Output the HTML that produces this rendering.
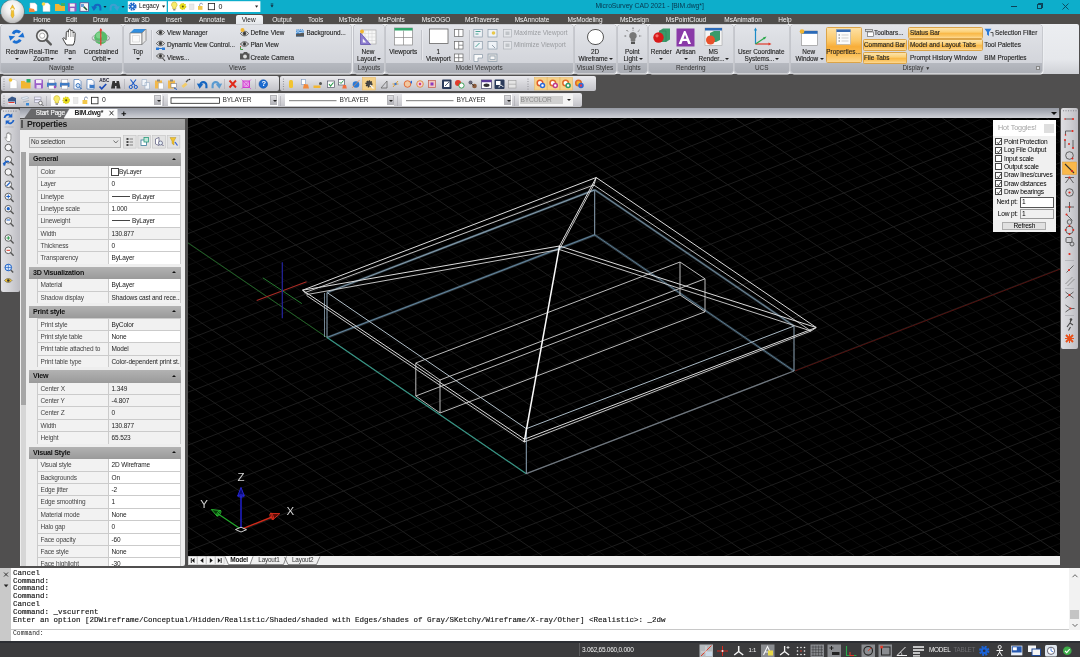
<!DOCTYPE html>
<html lang="en"><head><meta charset="utf-8"><title>MicroSurvey CAD 2021 - [BIM.dwg*]</title>
<style>
*{box-sizing:border-box;margin:0;padding:0}
html,body{width:1080px;height:657px;overflow:hidden;background:#504f4f;font-family:"Liberation Sans",sans-serif;}
body{position:relative;font-size:7px;color:#222;filter:blur(.65px)}
.a{position:absolute}
.t{position:absolute;white-space:nowrap;line-height:1}
.c{text-align:center}
/* title */
#title{left:0;top:0;width:1080px;height:13.6px;background:#0daecb}
#tabs{left:0;top:13.6px;width:1080px;height:11.4px;background:#4f4d4b}
#tabs .t{color:#f4f4f4;font-size:6.5px;top:3.5px;transform:translateX(-50%)}
/* ribbon */
#ribbon{left:0;top:23.6px;width:1078.5px;height:50.2px;border-radius:0 2px 0 0;background:linear-gradient(#eceef1 0,#e6e8ec 70%,#cfd1d6 100%)}
.grp{position:absolute;top:.8px;height:48px;border-radius:2.5px;background:linear-gradient(#e2e4e9 0,#dcdee3 30%,#d3d5db 78%);box-shadow:0 0 0 .6px #a9abb2,.8px .8px 0 .6px #f6f7f9;overflow:hidden}
.grp .lab{position:absolute;left:0;right:0;bottom:0;height:9.3px;background:linear-gradient(#b6b9c0,#aaadb4);color:#333;font-size:6.4px;text-align:center;line-height:9.6px;border-radius:0 0 2px 2px}
.rt{position:absolute;white-space:nowrap;line-height:1;font-size:6.4px;color:#1e1e1e;-webkit-text-stroke:.12px #1e1e1e;transform:translateX(-50%);text-align:center}
.rs{position:absolute;white-space:nowrap;line-height:1;font-size:6.4px;color:#1e1e1e;-webkit-text-stroke:.12px #1e1e1e}
.or{position:absolute;background:linear-gradient(#fde4ac 0,#fbcf74 42%,#f9b846 52%,#fbc766 80%,#fdd994 100%);border:.5px solid #dba448;border-radius:1.5px}
/* toolbars */
.tb{position:absolute;background:linear-gradient(#eaeaee 0,#d6d6da 50%,#c2c2c8 100%);border-radius:2px}
.combo{position:absolute;background:#fff;height:11.5px;top:1.5px}
.combo .dd{position:absolute;right:.5px;top:.5px;bottom:.5px;width:7px;background:linear-gradient(#dcdce0,#b4b4ba);border:.4px solid #b4b4b8}
.combo .dd:after{content:"";position:absolute;left:1.5px;top:4px;border:2px solid transparent;border-top:2.5px solid #222}
/* props */
#props{left:19.6px;top:118.5px;width:165.8px;height:447px;background:#eeeeee;overflow:hidden;border-radius:0 0 2px 0}
.sec{position:absolute;z-index:2;left:9.4px;width:152px;height:12.5px;background:linear-gradient(#b2b2b2,#9a9a9a);font-weight:bold;font-size:7.1px;color:#111;line-height:12.8px;padding-left:4px;letter-spacing:-.2px}
.sec:after{content:"";position:absolute;right:5px;top:4.6px;border:2.1px solid transparent;border-bottom:2.6px solid #111;border-top:0}
.row{position:absolute;left:17.7px;width:143.7px;height:12.36px;background:#cbcbcb;font-size:6.5px;line-height:12px;color:#222}
.row i{position:absolute;left:.7px;width:70.3px;top:1px;bottom:0;background:#f2f2f2;color:#444;font-style:normal;padding-left:2.5px;letter-spacing:-.15px}
.row b{position:absolute;left:71.8px;right:.6px;top:1px;bottom:0;background:#fff;font-weight:normal;padding-left:2.5px;letter-spacing:-.15px;white-space:nowrap;overflow:hidden}
/* cmd */
#cmd{left:0;top:567.5px;width:1080px;height:74px;background:#fff}
#cmd .hl{position:absolute;left:13px;font-family:"Liberation Mono",monospace;font-size:7.5px;line-height:7.8px;color:#111;white-space:pre;-webkit-text-stroke:.15px #222}
#status{left:0;top:641px;width:1080px;height:16px;background:#3b3b3d}
.si{position:absolute;top:3px;width:12px;height:12px}
/* hot toggles */
#hot{left:993px;top:120px;width:62.5px;height:111.5px;background:#f0f0f0}
#hot .cb{position:absolute;left:2.3px;width:7.2px;height:7.2px;background:#fff;border:.6px solid #444;margin-top:-.2px}
#hot .l{position:absolute;left:11px;font-size:6.6px;line-height:1;color:#000;white-space:nowrap;letter-spacing:-.2px}
</style></head><body>
<!-- TITLE BAR -->
<div id="title" class="a">
  <div class="t" style="left:595.5px;top:3.4px;font-size:6.8px;color:#07364e;letter-spacing:-.05px">MicroSurvey CAD 2021 - [BIM.dwg*]</div>
  <!-- quick access icons -->
  <svg class="a" style="left:26px;top:0" width="250" height="14" viewBox="0 0 250 14">
    <!-- new from template -->
    <path d="M4 3h5l2 2v6H4z" fill="#fff" stroke="#c9c9c9" stroke-width=".5"/><path d="M3 8l5 1 1 3H3z" fill="#f28a3c"/>
    <!-- new -->
    <path d="M17 3h5l2 2v6.5h-7z" fill="#fff" stroke="#d0d0d0" stroke-width=".5"/><circle cx="17.5" cy="4" r="1.8" fill="#f7d84a"/>
    <!-- open -->
    <path d="M29 4h4l1 1.2h5V11H29z" fill="#f2b632"/><path d="M35 3h4v3h-4z" fill="#3fae6a"/>
    <!-- save -->
    <rect x="42" y="3" width="8.5" height="8.5" rx=".8" fill="#8a5bc0"/><rect x="43.8" y="3.6" width="5" height="3" fill="#f2f2f2"/><rect x="44.2" y="8" width="4.2" height="3.4" fill="#e8e0f4"/>
    <!-- saveas/print preview -->
    <rect x="54" y="2.8" width="8.5" height="8.5" fill="#f4f4f4" stroke="#5a4a8a" stroke-width=".8"/><path d="M56 5l5 5" stroke="#1a5a3a" stroke-width="1.6"/><rect x="55" y="4" width="3" height="3" fill="#6aa0d8"/>
    <!-- undo -->
    <path d="M74.400 10.400V7.700a3 3 0 0 0-6 0" fill="none" stroke="#1565c0" stroke-width="2"/><path d="M65.200 6.200l6 .6-3.400 4.300z" fill="#1565c0"/>
    <path d="M77.5 6l1.5 2 1.500-2z" fill="#123"/>
    <!-- redo -->
    <path d="M84.600 10.400V7.700a3 3 0 0 1 6 0" fill="none" stroke="#3f9fd0" stroke-width="2"/><path d="M93.800 6.200l-6 .6 3.400 4.300z" fill="#3f9fd0"/>
    <path d="M95.500 6l1.500 2 1.500-2z" fill="#123"/>
    <!-- workspace combo -->
    <rect x="101.800" y="1.200" width="38.900" height="10.800" fill="#fff"/>
    <circle cx="106.500" cy="6.600" r="3" fill="none" stroke="#1e66c8" stroke-width="2.200" stroke-dasharray="1.600 .75"/><circle cx="106.500" cy="6.600" r="2.500" fill="#1e66c8"/><circle cx="106.500" cy="6.600" r="1" fill="#fff"/>
    <path d="M136 5.500l1.600 2.200 1.600-2.200z" fill="#222"/>
    <!-- layer combo -->
    <rect x="142" y="1.200" width="92.400" height="10.800" fill="#fff"/>
    <path d="M148.300 2a2.800 2.800 0 0 1 1.600 5.100v1.700h-3.200V7.100a2.800 2.800 0 0 1 1.600-5.100z" fill="#f8ec6a" stroke="#b8a21a" stroke-width=".5"/><rect x="147.200" y="9" width="2.200" height="1.500" fill="#8a8a8a"/>
    <circle cx="156.800" cy="6.400" r="2.800" fill="#e8dc1a" stroke="#d8cc10" stroke-width="1.400" stroke-dasharray="1.300 .8"/><circle cx="156.800" cy="6.400" r="2.300" fill="#ece21e"/><circle cx="156.800" cy="6.400" r="1" fill="#5a5410"/>
    <rect x="163.500" y="4" width="4.500" height="5.500" fill="#e8e8e8" stroke="#cfcfcf" stroke-width=".4"/>
    <rect x="172" y="6" width="4.500" height="3.800" fill="#f2c84a"/><path d="M173.700 6V4.600a1.400 1.400 0 0 1 2.800 0" fill="none" stroke="#7a8aa8" stroke-width=".8"/>
    <rect x="182.300" y="3.400" width="6.300" height="6.300" fill="#fff" stroke="#222" stroke-width=".8"/>
    <path d="M229 5.500l1.600 2.200 1.600-2.200z" fill="#222"/>
    <path d="M244.500 5.200l1.500 2.200 1.500-2.200z" fill="#123"/><rect x="244.700" y="3.600" width="2.600" height=".8" fill="#123"/>
  </svg>
  <div class="t" style="left:139px;top:3.400px;font-size:6.400px;color:#111;letter-spacing:-.1px">Legacy</div>
  <div class="t" style="left:218.500px;top:3.400px;font-size:7px;color:#111">0</div>
  <!-- window controls -->
  <div class="a" style="left:1010.500px;top:6.300px;width:6px;height:.9px;background:#0b4258"></div>
  <div class="a" style="left:1036.500px;top:3.800px;width:5px;height:5px;border:.8px solid #0b4258;border-radius:.6px"></div>
  <div class="a" style="left:1038px;top:2.600px;width:5px;height:5px;border:.8px solid #0b4258;border-left:0;border-bottom:0;border-radius:.6px"></div>
  <svg class="a" style="left:1062px;top:3px" width="7" height="7"><path d="M.5.5l6 6M6.500.5l-6 6" stroke="#0b4258" stroke-width=".9"/></svg>
</div>
<!-- MENU TABS -->
<div id="tabs" class="a">
  <div class="a" style="left:235.500px;top:1.400px;width:27px;height:10px;background:linear-gradient(#f4f5f7,#e4e6ea);border-radius:2px 2px 0 0"></div>
  <div class="t" style="left:42px">Home</div><div class="t" style="left:71.500px">Edit</div><div class="t" style="left:100.700px">Draw</div>
  <div class="t" style="left:137px">Draw 3D</div><div class="t" style="left:173.700px">Insert</div><div class="t" style="left:212px">Annotate</div>
  <div class="t" style="left:248.700px;color:#222">View</div><div class="t" style="left:282px">Output</div><div class="t" style="left:315.600px">Tools</div>
  <div class="t" style="left:350.700px">MsTools</div><div class="t" style="left:391.500px">MsPoints</div><div class="t" style="left:436px">MsCOGO</div>
  <div class="t" style="left:482px">MsTraverse</div><div class="t" style="left:532px">MsAnnotate</div><div class="t" style="left:585px">MsModeling</div>
  <div class="t" style="left:634.400px">MsDesign</div><div class="t" style="left:686px">MsPointCloud</div><div class="t" style="left:743px">MsAnimation</div>
  <div class="t" style="left:785px">Help</div>
</div>
<!-- app button -->
<div class="a" style="left:1.200px;top:-.5px;width:23px;height:23px;border-radius:50%;background:radial-gradient(circle at 50% 35%,#fff 0,#f0f0f0 35%,#c8c8c8 70%,#8e8e8e 100%);box-shadow:0 0 0 .6px #6a6a6a"></div>
<svg class="a" style="left:7.200px;top:4px" width="11" height="15" viewBox="0 0 11 15"><path d="M5.500.8l2.200 4.200-1.200 1 .6 5.500-1.600 2.700-1.600-2.700.6-5.500-1.200-1z" fill="#f2c230" stroke="#c8961a" stroke-width=".4"/><circle cx="5.500" cy="5.200" r="1.300" fill="#fff3c0"/></svg>
<!-- RIBBON -->
<div id="ribbon" class="a"><div id="rin" class="a" style="left:0;top:.4px;width:1080px;height:49px">
<style>
.ar{position:absolute;width:0;height:0;border:2px solid transparent;border-top:2.6px solid #222;border-bottom:0;margin-top:.3px;margin-left:-.3px}
.vs{position:absolute;width:.6px;background:#c2c4ca;box-shadow:.6px 0 0 #f0f1f4}
.gy{color:#9a9ca0 !important;-webkit-text-stroke:0 transparent !important}
</style>
<!-- Navigate -->
<div class="grp" style="left:1px;width:121px"><div class="lab">Navigate</div></div>
<svg class="a" style="left:0;top:0" width="122" height="24" viewBox="0 24 122 24">
  <!-- redraw -->
  <g fill="none" stroke="#1b6fd2" stroke-width="2.900"><path d="M13 33.800a4.300 4.300 0 0 1 7-1.300"/><path d="M20.300 39.600a4.300 4.300 0 0 1-7 1.300"/></g>
  <path d="M8.700 35.800l6.400.4-4.800 4.600z" fill="#1b6fd2"/><path d="M24.500 37.500l-6.400-.4 4.800-4.600z" fill="#1b6fd2"/>
  <!-- zoom -->
  <circle cx="42.200" cy="35.700" r="5.500" fill="#f6f6f6" stroke="#5a5a5a" stroke-width="1.700"/><circle cx="42.200" cy="35.700" r="2.600" fill="#fff" stroke="#9a9a9a" stroke-width=".8"/><path d="M46.300 39.900l4.500 4.500" stroke="#5a5a5a" stroke-width="2.400" stroke-linecap="round"/>
  <!-- pan hand -->
  <path d="M66.500 45c-1.200-1.800-3-4.600-3.800-6.600.9-1 2.200-.3 3.300 1.300l.3-7.400c.1-1.400 2-1.400 2 0l.3-2.200c.2-1.400 2.100-1.300 2.100.1l.2 1c.3-1.300 2.100-1.200 2.100.2l.1 1.600c.5-1.200 2.200-.9 2.100.4l-.4 6.800c-.1 2-.9 3.600-1.600 4.800z" fill="#fff" stroke="#3c3c3c" stroke-width="1"/>
  <path d="M68.400 32.500v4.500M70.800 31.500v5.500M73.100 32.800v4.200" stroke="#555" stroke-width=".6"/>
  <!-- orbit -->
  <ellipse cx="100.800" cy="38" rx="8.800" ry="3.600" fill="none" stroke="#a0a0a0" stroke-width=".9"/>
  <circle cx="100.800" cy="37.600" r="6.600" fill="#58bb6a"/><circle cx="99" cy="35.500" r="3" fill="#8fdb9a" opacity=".7"/>
  <path d="M92.300 39.300c4 2.700 13 2.700 17 0" fill="none" stroke="#a0a0a0" stroke-width=".9"/>
  <path d="M100.800 29.500v16" stroke="#e8382a" stroke-width="1.200"/><path d="M99.200 30.800l1.600-2.800 1.600 2.800z" fill="#e8382a"/>
</svg>
<div class="rt" style="left:16.800px;top:24.800px">Redraw</div><div class="ar" style="left:14.800px;top:34px"></div>
<div class="rt" style="left:43.700px;top:24.800px">Real-Time</div><div class="rt" style="left:41.500px;top:31.900px">Zoom</div><div class="ar" style="left:50.500px;top:34px"></div>
<div class="rt" style="left:70px;top:24.800px">Pan</div><div class="ar" style="left:68.300px;top:34px"></div>
<div class="rt" style="left:101px;top:24.800px">Constrained</div><div class="rt" style="left:99px;top:31.900px">Orbit</div><div class="ar" style="left:107.500px;top:34px"></div>
<!-- Views -->
<div class="grp" style="left:124px;width:227px"><div class="lab">Views</div></div>
<svg class="a" style="left:129px;top:4.500px" width="18" height="18" viewBox="0 0 18 18"><path d="M1 5l4-4h12l-4 4z" fill="#2f8ee0"/><path d="M1 5h12v11.500H1z" fill="#fafafa" stroke="#777" stroke-width=".7"/><path d="M13 5l4-4v11.500l-4 4z" fill="#e6e6e6" stroke="#777" stroke-width=".7"/><path d="M3.500 7.500h7v6.500h-7z" fill="none" stroke="#ccc" stroke-width=".6"/></svg>
<div class="rt" style="left:138px;top:24.800px">Top</div><div class="ar" style="left:136.300px;top:34px"></div>
<div class="vs" style="left:151px;top:6px;height:30px"></div>
<svg class="a" style="left:155px;top:3px" width="150" height="38" viewBox="0 0 150 38">
  <g fill="none" stroke="#444" stroke-width=".9">
   <path d="M1.500 5.500c2-3 6-3 8 0-2 3-6 3-8 0z" fill="#e8e8e8"/><circle cx="5.500" cy="5.500" r="1.400" fill="#333"/>
   <path d="M1.500 16.500c2-3 6-3 8 0-2 3-6 3-8 0z" fill="#e8e8e8"/><circle cx="5.500" cy="16.500" r="1.400" fill="#333"/>
   <path d="M1.500 29c2-3 6-3 8 0-2 3-6 3-8 0z" fill="#e8e8e8"/><circle cx="5.500" cy="29" r="1.400" fill="#333"/>
   <path d="M85.500 6.500c2-3 6-3 8 0-2 3-6 3-8 0z" fill="#e8e8e8"/><circle cx="89.500" cy="6.500" r="1.400" fill="#333"/>
   <path d="M85.500 17c2-3 6-3 8 0-2 3-6 3-8 0z" fill="#e8e8e8"/><circle cx="89.500" cy="17" r="1.400" fill="#333"/>
  </g>
  <path d="M1 20.500h3v2.500H1zM7 20.500h3v2.500H7z" fill="#2a7ad8"/><path d="M4 21.500h3" stroke="#2a7ad8"/>
  <path d="M7.500 31l2.500 3" stroke="#444" stroke-width="1.100"/>
  <circle cx="87.500" cy="3" r="2" fill="#f2b632"/>
  <path d="M85.500 20v2.500h2.500" fill="none" stroke="#3a9a3a" stroke-width=".9"/><path d="M85.500 20v-1" stroke="#d83a2a" stroke-width=".9"/>
  <path d="M85 26.500h3l1-1.500h3l1 1.500h1.500v6H85z" fill="#555"/><circle cx="90" cy="29.500" r="1.900" fill="#ddd"/>
  <path d="M141 3.500h8v6h-8z" fill="#3a8ad8"/><path d="M141 7.500c2-2 3 0 4-1s2 0 4-1v4h-8z" fill="#555"/><path d="M141.500 2.500h7" stroke="#3a8ad8" stroke-width=".8" stroke-dasharray="1 .8"/><path d="M141 5.500l2-.8 2 1 3-.8 1 .5" stroke="#fff" stroke-width=".7" fill="none"/>
</svg>
<div class="rs" style="left:167px;top:6px">View Manager</div>
<div class="rs" style="left:167px;top:18.400px">Dynamic View Control...</div>
<div class="rs" style="left:167px;top:30.600px">Views...</div>
<div class="rs" style="left:250.400px;top:6px">Define View</div>
<div class="rs" style="left:250.400px;top:18.400px">Plan View</div>
<div class="rs" style="left:250.400px;top:30.600px">Create Camera</div>
<div class="rs" style="left:306.400px;top:6px">Background...</div>
<!-- Layouts -->
<div class="grp" style="left:354px;width:30px"><div class="lab">Layouts</div></div>
<svg class="a" style="left:359px;top:5px" width="18" height="17" viewBox="0 0 18 17"><rect x="3" y="1" width="14" height="14" fill="#f6f6f6" stroke="#999" stroke-width=".6"/><path d="M6 1v14M9.500 1v14M13 1v14M3 4.500h14M3 8h14M3 11.500h14" stroke="#d0d0d0" stroke-width=".5"/><path d="M1.500 15.500V4l10 11.500z" fill="#8a7ad0" stroke="#5a4aa8" stroke-width=".7"/><path d="M3.800 13.500V9.500l3.500 4z" fill="#f6f6f6"/><circle cx="3" cy="2.500" r="2" fill="#f2b632"/></svg>
<div class="rt" style="left:368px;top:24.800px">New</div><div class="rt" style="left:366.500px;top:31.900px">Layout</div><div class="ar" style="left:376.800px;top:34px"></div>
<!-- Model Viewports -->
<div class="grp" style="left:386px;width:186.500px"><div class="lab">Model Viewports</div></div>
<svg class="a" style="left:393px;top:3px" width="120" height="38" viewBox="0 0 120 38">
  <rect x="1.500" y="1" width="18" height="17" fill="#fff" stroke="#888" stroke-width=".7"/><rect x="1.500" y="1" width="18" height="2.500" fill="#2fa86a"/><path d="M10.500 3.500v14.500M1.500 10.500h18" stroke="#888" stroke-width=".7"/>
  <rect x="36.500" y="2" width="18.500" height="14.500" fill="#fff" stroke="#666" stroke-width=".8"/>
  <g fill="#fff" stroke="#666" stroke-width=".7"><rect x="61.500" y="2.500" width="8.500" height="7"/><path d="M65.700 2.500v7"/><rect x="61.500" y="14.500" width="8.500" height="7.500"/><path d="M65.700 14.500v7.500M65.700 18.200h4.300"/><rect x="61.500" y="27" width="8.500" height="7.500"/><path d="M65.700 27v7.500M61.500 30.700h8.500"/></g>
  <g fill="#eef2f6" stroke="#8a9aa8" stroke-width=".7"><rect x="80.800" y="2.500" width="8.500" height="7.500"/><rect x="95" y="2.500" width="9" height="7.500"/><rect x="80.800" y="14.500" width="8.500" height="7.500"/><rect x="95" y="14.500" width="9" height="7.500"/><path d="M81 34.500v-7h8.500v3.500h-4.500v3.500z" fill="#fafafa"/><rect x="95" y="27" width="9" height="7.500" fill="#ddd"/><rect x="97" y="29" width="5" height="3.500" fill="#f6f6f6"/></g>
  <path d="M82.500 4.500h5M82.500 7h3" stroke="#3a9a8a" stroke-width=".9"/><circle cx="100.500" cy="6" r="1.800" fill="#e8c84a"/><path d="M82.500 20l4-4" stroke="#3a9a8a" stroke-width=".9"/><path d="M99 18l3 3" stroke="#8a9aa8" stroke-width=".9"/>
  <g fill="#e4e6ea" stroke="#aeb2b8" stroke-width=".7"><rect x="110.500" y="2.500" width="8" height="7.500"/><rect x="110.500" y="14.500" width="8" height="7.500"/></g><rect x="112.500" y="4.500" width="4" height="3.500" fill="#c0c4c8"/><rect x="112.500" y="16.500" width="4" height="3.500" fill="#c0c4c8"/>
</svg>
<div class="rt" style="left:403.200px;top:24.800px">Viewports</div>
<div class="vs" style="left:421px;top:6px;height:30px"></div>
<div class="rt" style="left:438.300px;top:24.800px">1</div><div class="rt" style="left:438.300px;top:31.900px">Viewport</div>
<div class="vs" style="left:468.500px;top:6px;height:30px"></div>
<div class="rs gy" style="left:514px;top:6px">Maximize Viewport</div>
<div class="rs gy" style="left:514px;top:18.400px">Minimize Viewport</div>
<!-- Visual Styles -->
<div class="grp" style="left:574.500px;width:41px"><div class="lab">Visual Styles</div></div>
<div class="a" style="left:587px;top:5px;width:16.500px;height:16.500px;border-radius:50%;background:#fff;border:.9px solid #555"></div>
<div class="rt" style="left:595px;top:24.800px">2D</div><div class="rt" style="left:593.200px;top:31.900px">Wireframe</div><div class="ar" style="left:609.200px;top:34px"></div>
<!-- Lights -->
<div class="grp" style="left:618px;width:28.500px"><div class="lab">Lights</div></div>
<svg class="a" style="left:623.500px;top:3.500px" width="18" height="19" viewBox="0 0 18 19"><path d="M9 .5v3M2.500 3l2 2M15.500 3l-2 2M.5 9h2.500M15 9h2.500" stroke="#666" stroke-width="1" stroke-dasharray="1.500 .8"/><path d="M9 5a3.800 3.800 0 0 1 2.300 6.800v2.200H6.700v-2.200A3.800 3.800 0 0 1 9 5z" fill="#777"/><rect x="7" y="14.500" width="4" height="2.500" fill="#555"/></svg>
<div class="rt" style="left:632.300px;top:24.800px">Point</div><div class="rt" style="left:630.500px;top:31.900px">Light</div><div class="ar" style="left:638.800px;top:34px"></div>
<!-- Rendering -->
<div class="grp" style="left:649px;width:83.500px"><div class="lab">Rendering</div></div>
<svg class="a" style="left:651px;top:3px" width="78" height="21" viewBox="0 0 78 21"><path d="M8 4l4-2.500h7v11l-4 2.500H8z" fill="#3a9a6a"/><path d="M8 4h7v11" fill="none" stroke="#2a7a5a" stroke-width=".5"/><circle cx="7.500" cy="10.500" r="5.200" fill="#d81a1a"/><circle cx="6" cy="8.800" r="1.600" fill="#f2706a"/>
  <rect x="25.500" y="1.500" width="18" height="18" fill="#8a3aa8"/><path d="M34.500 4l5.500 13h-2.800l-1.200-3h-4.400l-1.200 3h-2.800L33 4zM32.500 11.800h3l-1.500-4z" fill="#fff"/>
  <rect x="54" y="1" width="17" height="17.500" fill="#f4f4f4" stroke="#999" stroke-width=".5"/><rect x="54" y="1" width="17" height="2.500" fill="#2a6ab8"/><path d="M59 6l4-2h6v9l-4 2h-6z" fill="#3a9a6a"/><circle cx="59.500" cy="13" r="4.500" fill="#e8502a"/></svg>
<div class="rt" style="left:661.300px;top:24.800px">Render</div><div class="ar" style="left:659.700px;top:34px"></div>
<div class="rt" style="left:685.700px;top:24.800px">Artisan</div><div class="ar" style="left:684px;top:34px"></div>
<div class="rt" style="left:713.300px;top:24.800px">MS</div><div class="rt" style="left:711.500px;top:31.900px">Render...</div><div class="ar" style="left:725.500px;top:34px"></div>
<!-- UCS -->
<div class="grp" style="left:735px;width:53.500px"><div class="lab">UCS</div></div>
<svg class="a" style="left:751px;top:3.500px" width="22" height="20" viewBox="0 0 22 20"><path d="M4.500 17V2" stroke="#1a8ac8" stroke-width="1.200"/><path d="M3 3.500L4.500.5 6 3.500z" fill="#1a8ac8"/><path d="M4.500 17h14" stroke="#e03a2a" stroke-width="1.200"/><path d="M17.500 15.500l3 1.500-3 1.500z" fill="#e03a2a"/><path d="M4.500 17l9-6" stroke="#2aa84a" stroke-width="1.200"/><path d="M12 10.500l3.500-1-1.800 3z" fill="#2aa84a"/></svg>
<div class="rt" style="left:761.200px;top:24.800px">User Coordinate</div><div class="rt" style="left:759.500px;top:31.900px">Systems...</div><div class="ar" style="left:775.500px;top:34px"></div>
<!-- Display -->
<div class="grp" style="left:791px;width:250.500px"><div class="lab">Display <span style="font-size:5px">&#9660;</span></div></div>
<svg class="a" style="left:799px;top:4px" width="20" height="19" viewBox="0 0 20 19"><rect x="2.500" y="3" width="16" height="14.500" fill="#fff" stroke="#888" stroke-width=".6"/><rect x="2.500" y="3" width="16" height="2.800" fill="#2a6ab8"/><circle cx="3" cy="3.500" r="2.300" fill="#f2b632"/></svg>
<div class="rt" style="left:808.700px;top:24.800px">New</div><div class="rt" style="left:806.800px;top:31.900px">Window</div><div class="ar" style="left:819.800px;top:34px"></div>
<div class="or" style="left:825.500px;top:3px;width:36px;height:36.500px;background:linear-gradient(#fde0a4 0,#fbc766 38%,#f8ad38 55%,#fbc25c 82%,#fdd68c 100%)"></div>
<svg class="a" style="left:835.500px;top:5px" width="15" height="16" viewBox="0 0 15 16"><rect x=".5" y=".5" width="14" height="15" fill="#fbfbfb" stroke="#aaa" stroke-width=".6"/><rect x=".5" y=".5" width="14" height="2.500" fill="#3a6ab0"/><path d="M2.500 6h1.500M2.500 9h1.500M2.500 12h1.500" stroke="#666" stroke-width=".9"/><path d="M5.500 6h7M5.500 9h7M5.500 12h7" stroke="#bbb" stroke-width=".7"/></svg>
<div class="rt" style="left:843.500px;top:24.800px">Properties...</div>
<div class="or" style="left:862.500px;top:15.500px;width:44.500px;height:12px"></div>
<div class="or" style="left:862.500px;top:27.700px;width:44.500px;height:12px"></div>
<div class="or" style="left:908.200px;top:3.200px;width:74.500px;height:12px"></div>
<div class="or" style="left:908.200px;top:15.500px;width:74.500px;height:12px"></div>
<svg class="a" style="left:864.500px;top:5.500px" width="9" height="8" viewBox="0 0 9 8"><rect x=".5" y=".5" width="7" height="2" fill="#ddd" stroke="#555" stroke-width=".6"/><rect x="2.500" y="3" width="6" height="4.500" fill="#fff" stroke="#555" stroke-width=".6"/></svg>
<div class="rs" style="left:874px;top:6px">Toolbars...</div>
<div class="rs" style="left:864px;top:18.400px">Command Bar</div>
<div class="rs" style="left:864px;top:30.600px">File Tabs</div>
<div class="rs" style="left:910px;top:6px">Status Bar</div>
<div class="rs" style="left:910px;top:18.400px">Model and Layout Tabs</div>
<div class="rs" style="left:910px;top:30.600px">Prompt History Window</div>
<svg class="a" style="left:984px;top:4.500px" width="10" height="9" viewBox="0 0 10 9"><path d="M.5.8h7L5 4v4L3 6.500V4z" fill="#2a7ad8"/><path d="M6.500 4.500h2.500v4" fill="none" stroke="#333" stroke-width=".8"/></svg>
<div class="rs" style="left:995px;top:6px">Selection Filter</div>
<div class="rs" style="left:984.300px;top:18.400px">Tool Palettes</div>
<div class="rs" style="left:984.300px;top:30.600px">BIM Properties</div>
<div class="a" style="left:1035.500px;top:42.500px;width:4px;height:4px;border:.5px solid #888;background:#d8dade"></div>
</div></div>
<!-- TOOLBAR ROW 1 -->
<div class="tb" style="left:1px;top:76px;width:278px;height:14.500px"></div>
<div class="tb" style="left:279.500px;top:76px;width:316px;height:14.500px"></div>
<svg class="a" style="left:0;top:76px" width="600" height="15" viewBox="0 0 600 15">
  <g fill="#8a8a90"><circle cx="4" cy="3" r=".6"/><circle cx="4" cy="5.500" r=".6"/><circle cx="4" cy="8" r=".6"/><circle cx="4" cy="10.500" r=".6"/><circle cx="4" cy="13" r=".6"/>
  <circle cx="283.500" cy="3" r=".6"/><circle cx="283.500" cy="5.500" r=".6"/><circle cx="283.500" cy="8" r=".6"/><circle cx="283.500" cy="10.500" r=".6"/><circle cx="283.500" cy="13" r=".6"/>
  <circle cx="528" cy="3" r=".6"/><circle cx="528" cy="5.500" r=".6"/><circle cx="528" cy="8" r=".6"/><circle cx="528" cy="10.500" r=".6"/><circle cx="528" cy="13" r=".6"/></g>
  <!-- new -->
  <path d="M10 3.500h5l2 2v7h-7z" fill="#fff" stroke="#bbb" stroke-width=".5"/><circle cx="10.500" cy="4" r="1.800" fill="#f4c430"/>
  <!-- open -->
  <path d="M21 5h3.500l1 1.300h5v6.200H21z" fill="#f2b632"/><rect x="26.500" y="3" width="4" height="3.500" fill="#2fae6a"/>
  <!-- save -->
  <rect x="34.500" y="3.500" width="8.500" height="9" rx=".8" fill="#9a5fc8"/><rect x="36" y="4" width="5.500" height="3.200" fill="#f6f0fa"/><rect x="36.500" y="9" width="4.500" height="3.500" fill="#e8d8f4"/>
  <!-- print x2 -->
  <g><rect x="47" y="6.500" width="9.500" height="4.500" rx=".8" fill="#3a7ac8"/><rect x="48.800" y="3.500" width="6" height="3.500" fill="#fff" stroke="#889" stroke-width=".4"/><rect x="48.800" y="9.500" width="6" height="3.500" fill="#fff" stroke="#889" stroke-width=".4"/><circle cx="55" cy="11" r="1.300" fill="#a050c0"/></g>
  <g><rect x="60" y="6.500" width="9.500" height="4.500" rx=".8" fill="#3a7ac8"/><rect x="61.800" y="3.500" width="6" height="3.500" fill="#fff" stroke="#889" stroke-width=".4"/><rect x="61.800" y="9.500" width="6" height="3.500" fill="#fff" stroke="#889" stroke-width=".4"/></g>
  <!-- preview -->
  <path d="M74 3.500h5l2 2v7.500h-7z" fill="#fff" stroke="#4a7ab8" stroke-width=".7"/><circle cx="78" cy="9.500" r="2" fill="#cfe4f8" stroke="#1a5ab0" stroke-width=".8"/><path d="M79.500 11l2 2" stroke="#1a5ab0" stroke-width="1"/>
  <path d="M87 3.500h5l2 2v7.500h-7z" fill="#fff" stroke="#4a7ab8" stroke-width=".7"/><rect x="89.500" y="8.500" width="5" height="3.500" fill="#3a7ac8"/><rect x="90.500" y="7.500" width="3" height="1.500" fill="#dde"/>
  <!-- spell -->
  <path d="M99.500 10.500l2.200 2.300 4.500-4.800" fill="none" stroke="#1a4ab8" stroke-width="1.700"/>
  <!-- binoculars -->
  <path d="M112.500 5h2.500v2h1.500V5h2.500l1.500 7.500h-4V10h-1.500v2.500h-4z" fill="#333"/>
  <path d="M124.500 3v10" stroke="#a8a8ae" stroke-width=".6"/>
  <!-- cut -->
  <path d="M130.500 3.500l4.500 6M136 3.500l-4.500 6" stroke="#1a5ac8" stroke-width="1.100"/><circle cx="130.800" cy="11" r="1.600" fill="none" stroke="#1a5ac8" stroke-width="1"/><circle cx="135.800" cy="11" r="1.600" fill="none" stroke="#1a5ac8" stroke-width="1"/>
  <!-- copy -->
  <path d="M142 3.500h4.500v6H142zM145 6.500h4.500v6.500H145z" fill="#f2f6fa" stroke="#9ab0c8" stroke-width=".6"/>
  <!-- paste -->
  <rect x="155" y="4.500" width="7" height="8" fill="#f2b84a"/><rect x="157" y="3.500" width="3" height="2" fill="#888"/><rect x="158.500" y="7" width="5" height="6" fill="#fff" stroke="#aaa" stroke-width=".5"/>
  <rect x="168" y="4.500" width="7" height="8" fill="#f2b84a"/><rect x="170" y="3.500" width="3" height="2" fill="#888"/><rect x="171" y="7.500" width="5.500" height="4" fill="#fff" stroke="#667" stroke-width=".5"/><path d="M174 12l3 1.500" stroke="#1a5ac8" stroke-width="1"/>
  <!-- brush -->
  <path d="M181.500 10l4-3.500 2 2-4 3.500z" fill="#f2cc6a"/><path d="M186 6l2.500-2.500" stroke="#555" stroke-width="1.300"/><circle cx="189.500" cy="3.500" r=".8" fill="#333"/>
  <path d="M194.500 3v10" stroke="#a8a8ae" stroke-width=".6"/>
  <!-- undo/redo -->
  <path d="M206.400 12.200V9.200a3.100 3.100 0 0 0-6.200 0" fill="none" stroke="#1565c0" stroke-width="2.100"/><path d="M196.800 7.600l6.400.6-3.600 4.600z" fill="#1565c0"/>
  <path d="M212.600 12.200V9.200a3.100 3.100 0 0 1 6.200 0" fill="none" stroke="#5a9ad0" stroke-width="2.100"/><path d="M222.200 7.600l-6.400.6 3.600 4.600z" fill="#5a9ad0"/>
  <path d="M224.500 3v10" stroke="#a8a8ae" stroke-width=".6"/>
  <path d="M229.500 4.500l6.500 7M236 4.500l-6.500 7" stroke="#e02a1a" stroke-width="1.900"/>
  <rect x="243" y="5" width="6.500" height="6.500" fill="#e8a0e8" stroke="#d030d0" stroke-width=".9"/><path d="M241.500 3.500l9.500 9.500M251 3.500l-9.500 9.500" stroke="#d030d0" stroke-width=".6"/>
  <path d="M255.500 3v10" stroke="#a8a8ae" stroke-width=".6"/>
  <circle cx="263.300" cy="8" r="4.300" fill="#1a6ad0" stroke="#0a4aa0" stroke-width=".5"/>
  <!-- second toolbar -->
  <rect x="289" y="4" width="4" height="8" rx="1.500" fill="#f2c430"/>
  <rect x="301.500" y="3.500" width="4" height="5" fill="#fff" stroke="#6a8ab8" stroke-width=".5"/><path d="M304 8l4 .5 1 4h-6z" fill="#f28a3c"/>
  <path d="M313.500 9.500h7v2.500h-7z" fill="#f2b632"/><circle cx="320.500" cy="7.500" r="1.500" fill="#555"/>
  <rect x="327.500" y="5" width="7" height="6.500" fill="#fff" stroke="#556" stroke-width=".7"/><path d="M329 8l1.500 2 3-3.500" stroke="#2a9a4a" stroke-width="1.100" fill="none"/>
  <rect x="338.500" y="3.500" width="6" height="5.500" fill="#fff" stroke="#556" stroke-width=".7"/><path d="M339.500 6l1.500 1.500 2.500-3" stroke="#2a9a4a" stroke-width="1" fill="none"/><path d="M343 9l3 0 .8 3.500h-4.500z" fill="#f2703c"/>
  <circle cx="356" cy="8.500" r="3.300" fill="#2a7ad8"/><path d="M352 12l7.500-8" stroke="#f28a3c" stroke-width=".7"/>
  <rect x="362.500" y="1.500" width="13" height="12.500" fill="#f6d28a" stroke="#e6b45a" stroke-width=".5"/><circle cx="369" cy="7.800" r="2.800" fill="#444" stroke="#333" stroke-width="1.600" stroke-dasharray="1.200 .9"/><path d="M370 9l3.500 3.500" stroke="#f4f4f4" stroke-width="1.200"/>
  <path d="M381 12l6-7v7z" fill="none" stroke="#666" stroke-width=".8"/>
  <path d="M393 11l5-6M392.500 8h6" stroke="#e0a030" stroke-width="1"/><circle cx="395.500" cy="8" r="1.200" fill="#3a7ad8"/>
  <circle cx="407.500" cy="8" r="3.300" fill="#f2c8a0" stroke="#e0602a" stroke-width=".9"/><path d="M410 6l2-1.500v3.500z" fill="#2a6ad8"/>
  <circle cx="420" cy="8" r="3.300" fill="#f6d0d0" stroke="#e08a3a" stroke-width=".9"/><circle cx="420" cy="8" r="1.200" fill="#c03a9a"/>
  <rect x="428.500" y="4.500" width="7" height="7" fill="#f2c8c0" stroke="#c05a4a" stroke-width=".7"/><rect x="430.500" y="6.500" width="3" height="3" fill="#8a3ac0"/>
  <rect x="442" y="3.500" width="9.500" height="9.500" rx="1" fill="#2a3a5a"/><rect x="444" y="5.500" width="5.500" height="5.500" fill="#fff"/><path d="M445 10l4-4" stroke="#2a3a5a" stroke-width=".8"/>
  <circle cx="458" cy="7" r="3" fill="#e03a2a"/><circle cx="461.500" cy="9.500" r="2.600" fill="#fff" stroke="#2a9a4a" stroke-width=".9"/>
  <circle cx="470.500" cy="6.500" r="2" fill="#667"/><circle cx="474.500" cy="10" r="2.300" fill="#8a5a3a"/><path d="M471 7l3 3" stroke="#333" stroke-width=".8"/>
  <rect x="481.500" y="4" width="10" height="8.500" fill="#fff" stroke="#446" stroke-width=".7"/><rect x="481.500" y="4" width="10" height="2.200" fill="#5a3a9a"/><ellipse cx="486.500" cy="9.300" rx="3" ry="1.700" fill="#333"/>
  <rect x="494.500" y="3.500" width="10" height="9.500" rx="1" fill="#2a3a5a"/><rect x="496" y="5" width="4.500" height="4" fill="#fff"/><path d="M499 11.500c0-2.500 3.500-3 4-.5" fill="none" stroke="#fff" stroke-width="1"/>
  <rect x="508.500" y="4.500" width="7.500" height="7.500" fill="#e4e4e4" stroke="#999" stroke-width=".6"/><path d="M508.500 8.200h7.500" stroke="#999" stroke-width=".6"/>
  <g><rect x="534.500" y="1.500" width="12.500" height="12.500" fill="#f6d28a" stroke="#e6b45a" stroke-width=".5"/><rect x="547.300" y="1.500" width="12.500" height="12.500" fill="#f6d28a" stroke="#e6b45a" stroke-width=".5"/><rect x="560.100" y="1.500" width="12.500" height="12.500" fill="#f6d28a" stroke="#e6b45a" stroke-width=".5"/></g>
  <g stroke-width="1.500" fill="#fff"><circle cx="540" cy="7" r="2.800" stroke="#e05a2a"/><circle cx="542.500" cy="9.500" r="2" stroke="#2a6ad8" fill="#fff"/>
  <circle cx="552.800" cy="7" r="2.800" stroke="#e06a2a"/><circle cx="555.300" cy="9.500" r="2" stroke="#c03a8a" fill="#fff"/>
  <circle cx="565.600" cy="7" r="2.800" stroke="#e06a2a"/><circle cx="568.100" cy="9.500" r="2" stroke="#2a9a6a" fill="#fff"/>
  <circle cx="578.500" cy="7" r="2.800" stroke="#e06a2a" fill="#f2b632"/><circle cx="581" cy="9.500" r="2" stroke="#2a6ad8" fill="#e03a5a"/></g>
</svg>
<div class="t" style="left:99.300px;top:78.800px;font-size:4.600px;font-weight:bold;color:#223">ABC</div>
<div class="t" style="left:261.500px;top:80.200px;font-size:7.500px;font-weight:bold;color:#fff">?</div>
<!-- TOOLBAR ROW 2 -->
<div class="tb" style="left:1px;top:92.500px;width:581px;height:14.500px">
  <div class="combo" style="left:50px;width:110.500px"><div class="dd"></div></div>
  <div class="combo" style="left:166.500px;width:110px"><div class="dd"></div></div>
  <div class="combo" style="left:283.500px;width:109.500px"><div class="dd"></div></div>
  <div class="combo" style="left:400.500px;width:110px"><div class="dd"></div></div>
  <div class="combo" style="left:518px;width:54px;background:#f4f4f4"><div class="dd" style="background:none;border:0"></div><div class="a" style="left:1px;top:1.500px;width:43px;height:8.500px;background:#d0d0d0"></div></div>
</div>
<svg class="a" style="left:0;top:92.500px" width="600" height="15" viewBox="0 0 600 15">
  <g fill="#8a8a90"><circle cx="4" cy="3" r=".6"/><circle cx="4" cy="5.500" r=".6"/><circle cx="4" cy="8" r=".6"/><circle cx="4" cy="10.500" r=".6"/><circle cx="4" cy="13" r=".6"/></g>
  <path d="M8 6l4-2.500 4 1.500v6H8z" fill="#3a5a8a"/><path d="M8 8.500h7v3H8z" fill="#e8e8f0"/><path d="M8.500 9.500h6" stroke="#e03a2a" stroke-width="1"/>
  <path d="M21 5l6-1.500 2 1.500-6 1.500z" fill="#e8eef6" stroke="#9ab" stroke-width=".5"/><path d="M23 9l6-1.500" stroke="#9ab" stroke-width=".8"/><rect x="26" y="10" width="3" height="2.500" fill="#3a8ad8"/>
  <rect x="34.500" y="4" width="6.500" height="2.500" fill="#eef" stroke="#889" stroke-width=".5"/><rect x="34.500" y="7" width="6.500" height="2.500" fill="#eef" stroke="#889" stroke-width=".5"/><circle cx="40.500" cy="10" r="1.800" fill="#fff" stroke="#555" stroke-width=".7"/><path d="M41.800 11.300l1.700 1.700" stroke="#555" stroke-width=".9"/>
  <path d="M46.500 3v10" stroke="#a8a8ae" stroke-width=".6"/>
  <path d="M56.800 2.600a3 3 0 0 1 1.700 5.500v1.900h-3.400V8.100a3 3 0 0 1 1.700-5.500z" fill="#f8ec6a" stroke="#b8a21a" stroke-width=".5"/><rect x="55.600" y="10.200" width="2.400" height="1.700" fill="#8a8a8a"/>
  <circle cx="66.200" cy="7.300" r="3" fill="#e8dc1a" stroke="#d8cc10" stroke-width="1.500" stroke-dasharray="1.300 .8"/><circle cx="66.200" cy="7.300" r="2.500" fill="#ece21e"/><circle cx="66.200" cy="7.300" r="1.100" fill="#5a5410"/>
  <rect x="73.500" y="4.500" width="4.500" height="6" fill="#eaeaea" stroke="#d4d4d4" stroke-width=".4"/>
  <rect x="82.500" y="7" width="4.800" height="4" fill="#f2c84a"/><path d="M84.500 7V5.500a1.500 1.500 0 0 1 3 0" fill="none" stroke="#7a8aa8" stroke-width=".9"/>
  <rect x="91.500" y="4.300" width="6.500" height="6.500" fill="#fff" stroke="#222" stroke-width=".8"/>
  <rect x="171" y="4.800" width="48.500" height="5.500" fill="#fff" stroke="#222" stroke-width=".8"/>
  <path d="M289 7.700h47.500" stroke="#555" stroke-width=".8"/>
  <path d="M406 7.700h47.500" stroke="#555" stroke-width=".8"/>
  <path d="M163.500 3v10M280.500 3v10M397.500 3v10M514.500 3v10" stroke="#a8a8ae" stroke-width=".6"/>
</svg>
<div class="t" style="left:102px;top:96.700px;font-size:6.800px;color:#222">0</div>
<div class="t" style="left:222.500px;top:96.800px;font-size:6.600px;color:#333;letter-spacing:-.15px">BYLAYER</div>
<div class="t" style="left:339.500px;top:96.800px;font-size:6.600px;color:#333;letter-spacing:-.15px">BYLAYER</div>
<div class="t" style="left:456.500px;top:96.800px;font-size:6.600px;color:#333;letter-spacing:-.15px">BYLAYER</div>
<div class="t" style="left:520.500px;top:96.800px;font-size:6.600px;color:#8a8a8a;letter-spacing:-.15px">BYCOLOR</div>
<!-- DOC TAB STRIP -->
<div class="a" style="left:19.500px;top:107.500px;width:1039px;height:10.500px;background:linear-gradient(#969aa4,#b2b5be 50%,#cfd0d6)"></div>
<svg class="a" style="left:20px;top:107.500px" width="120" height="11" viewBox="0 0 120 11"><path d="M4 10.500L11 .8H49l-5.500 9.700z" fill="#68686a"/><path d="M44 10.500l5.500-9.500H97.500v9.500z" fill="#fcfcfc"/><path d="M89.500 2.800l4 4.500M93.500 2.800l-4 4.500" stroke="#222" stroke-width=".9"/><path d="M101.500 5.800h4.600M103.800 3.500v4.600" stroke="#111" stroke-width="1.100"/></svg>
<div class="t" style="left:35.800px;top:110.200px;font-size:6.400px;color:#f8f8f8;letter-spacing:-.1px;-webkit-text-stroke:.15px #f8f8f8">Start Page</div>
<div class="t" style="left:74.500px;top:110px;font-size:6.800px;color:#222;font-weight:bold;letter-spacing:-.25px">BIM.dwg*</div>
<div class="a" style="left:1050.500px;top:111.800px;width:0;height:0;border:3px solid transparent;border-top:3.500px solid #111;border-bottom:0"></div>
<!-- LEFT VERTICAL TOOLBAR -->
<div class="a" style="left:1px;top:108.500px;width:18.500px;height:183.500px;background:linear-gradient(90deg,#e2e2e6,#d2d2d6 50%,#bcbcc2);border-radius:2px"></div>
<svg class="a" style="left:.3px;top:107.600px" width="19" height="258" viewBox="0 0 19 258">
  <g fill="#77777d"><circle cx="3.500" cy="3" r=".55"/><circle cx="6" cy="3" r=".55"/><circle cx="8.500" cy="3" r=".55"/><circle cx="11" cy="3" r=".55"/><circle cx="13.500" cy="3" r=".55"/><circle cx="16" cy="3" r=".55"/></g>
  <!-- redraw -->
  <path d="M4.500 10a3.600 3.600 0 0 1 6.200-2.200" fill="none" stroke="#1e63c8" stroke-width="1.800"/><path d="M12.300 5.200v4.300H8z" fill="#1e63c8"/>
  <path d="M13.500 12a3.600 3.600 0 0 1-6.200 2.200" fill="none" stroke="#1e63c8" stroke-width="1.800"/><path d="M5.700 16.800v-4.300H10z" fill="#1e63c8"/>
  <path d="M4.500 19h9" stroke="#9a9aa2" stroke-width=".5"/>
  <!-- pan -->
  <path d="M7.500 33.500c-1.200-1.200-2.300-3-2.600-4 .7-.5 1.300 0 1.800.8v-4.500c0-.8 1-.8 1 0v-.8c0-.8 1.100-.8 1.100 0v.6c0-.8 1.100-.8 1.100 0v.8c0-.7 1-.7 1 0v4.300c0 1.200-.6 2.200-1 2.800z" fill="#fff" stroke="#666" stroke-width=".6"/>
  <g fill="#f4f4f6" stroke="#666" stroke-width="1">
   <circle cx="8.300" cy="39.500" r="3.300"/><circle cx="8.300" cy="51.800" r="3.300"/><circle cx="8.300" cy="64" r="3.300"/><circle cx="8.300" cy="76.300" r="3.300"/>
   <circle cx="8.300" cy="88.500" r="3.300"/><circle cx="8.300" cy="100.700" r="3.300"/><circle cx="8.300" cy="113" r="3.300"/>
   <circle cx="8.300" cy="130" r="3.300"/><circle cx="8.300" cy="142.300" r="3.300"/>
  </g>
  <g stroke="#555" stroke-width="1.400" stroke-linecap="round">
   <path d="M10.800 42l2.400 2.400M10.800 54.300l2.400 2.400M10.800 66.500l2.400 2.400M10.800 78.800l2.400 2.400M10.800 91l2.400 2.400M10.800 103.200l2.400 2.400M10.800 115.500l2.400 2.400M10.800 132.500l2.400 2.400M10.800 144.800l2.400 2.400"/>
  </g>
  <path d="M4 57.500c-.5-3.500 3-5 5-3.500" fill="none" stroke="#1e63c8" stroke-width="1.600"/><path d="M2.500 55l3.500-.5-1 3.500z" fill="#1e63c8"/>
  <path d="M6.500 78l3.500-3.500" stroke="#1e63c8" stroke-width="1.100"/>
  <path d="M6.300 88.500h4M8.300 86.500v4" stroke="#1e63c8" stroke-width="1"/>
  <circle cx="8.300" cy="100.700" r="1.600" fill="#1e63c8"/>
  <path d="M6.500 112h3.600" stroke="#1e63c8" stroke-width="1"/>
  <path d="M6.500 130h3.600M8.300 128.200v3.600" stroke="#2a9a4a" stroke-width="1"/>
  <path d="M6.500 142.300h3.600" stroke="#e03a2a" stroke-width="1"/>
  <!-- more -->
  <circle cx="8.300" cy="159.500" r="3.300" fill="#dbe8f8" stroke="#1e63c8" stroke-width="1"/><path d="M5 159.500h6.600M8.300 156.200v6.600" stroke="#1e63c8" stroke-width=".7"/><path d="M10.800 162l2.400 2.400" stroke="#555" stroke-width="1.400"/>
  <path d="M4.500 172.500c2-2.600 5.500-2.600 7.500 0-2 2.600-5.500 2.600-7.500 0z" fill="#f2c430" stroke="#555" stroke-width=".6"/><circle cx="8.300" cy="172.500" r="1.300" fill="#333"/>
</svg>
<!-- PROPERTIES PANEL -->
<div id="props" class="a">
  <div class="a" style="left:0;top:0;width:165.800px;height:11px;background:linear-gradient(#a6a6a6,#9c9c9c)"></div>
  <div class="a" style="left:1.900px;top:1.500px;width:1.500px;height:8.300px;background:#555"></div>
  <div class="t" style="left:7.400px;top:1.700px;font-size:8.700px;font-weight:bold;color:#1a1a1a;letter-spacing:-.3px">Properties</div>
  <div class="a" style="left:1.500px;top:33.800px;width:5.200px;height:252.700px;background:#a6a6a6"></div>
  <div class="a" style="left:1.500px;top:286.500px;width:5.200px;height:161px;background:#d6d6d6"></div>
  <!-- combo -->
  <div class="a" style="left:9.100px;top:18px;width:92.600px;height:11.200px;background:#e6e6e6;border:.6px solid #b4b4b4"></div>
  <div class="t" style="left:11.400px;top:20.500px;font-size:6.500px;letter-spacing:-.15px;color:#333">No selection</div>
  <svg class="a" style="left:93.900px;top:21.700px" width="6" height="4"><path d="M.5.500l2.300 2.500 2.300-2.500" fill="none" stroke="#555" stroke-width=".8"/></svg>
  <svg class="a" style="left:103.700px;top:16.700px" width="58" height="13.500" viewBox="0 0 58 13.500">
    <g fill="#e2e2e2" stroke="#c2c2c2" stroke-width=".6"><rect x=".4" y=".4" width="12.700" height="12.700"/><rect x="14.900" y=".4" width="12.700" height="12.700"/><rect x="29.600" y=".4" width="12.700" height="12.700"/><rect x="44.200" y=".4" width="12.700" height="12.700"/></g>
    <path d="M3.500 3h2v2h-2zM3.500 6h2v2h-2zM3.500 9h2v2h-2z" fill="#444"/><path d="M6.500 4h3.500M6.500 7h3.500M6.500 10h3.500" stroke="#666" stroke-width=".8"/>
    <rect x="18" y="5" width="5.500" height="5.500" fill="#fff" stroke="#3a7a9a" stroke-width=".8"/><rect x="21" y="2.500" width="4.500" height="4.500" fill="#bfe8d8" stroke="#2a9a7a" stroke-width=".8"/>
    <path d="M32.500 4l3.500-1.500v8L32.500 9z" fill="#fff" stroke="#557" stroke-width=".7"/><circle cx="37.500" cy="8" r="2" fill="#e6f0f8" stroke="#557" stroke-width=".7"/><path d="M39 9.500l1.500 1.500" stroke="#557" stroke-width=".9"/>
    <path d="M47 2.500h6l-2 3.500v4l-2-1.500V6z" fill="#f2c430" stroke="#a8861a" stroke-width=".4"/><path d="M52 7l2.500 3.500" stroke="#2a5ad8" stroke-width="1.200"/>
  </svg>
  
<div class="sec" style="top:34.60px">General</div>
<div class="row" style="top:46.50px;height:12px;line-height:11.5px"><i>Color</i><b><span style="display:inline-block;width:7.600px;height:7.600px;border:.7px solid #444;background:#fff;vertical-align:-1.800px;margin-right:.3px;margin-left:-.5px"></span>ByLayer</b></div>
<div class="row" style="top:58.50px;height:13px;line-height:12.5px"><i>Layer</i><b>0</b></div>
<div class="row" style="top:71.50px;height:12px;line-height:11.5px"><i>Linetype</i><b><span style="display:inline-block;width:18px;height:.7px;background:#444;vertical-align:2.200px;margin-right:2.500px"></span>ByLayer</b></div>
<div class="row" style="top:83.50px;height:12px;line-height:11.5px"><i>Linetype scale</i><b>1.000</b></div>
<div class="row" style="top:95.50px;height:13px;line-height:12.5px"><i>Lineweight</i><b><span style="display:inline-block;width:18px;height:.7px;background:#444;vertical-align:2.200px;margin-right:2.500px"></span>ByLayer</b></div>
<div class="row" style="top:108.50px;height:12px;line-height:11.5px"><i>Width</i><b style="background:#f1f1f1">130.877</b></div>
<div class="row" style="top:120.50px;height:12px;line-height:11.5px"><i>Thickness</i><b>0</b></div>
<div class="row" style="top:132.50px;height:13px;line-height:12.5px"><i>Transparency</i><b>ByLayer</b></div>
<div class="sec" style="top:148.00px">3D Visualization</div>
<div class="row" style="top:159.50px;height:13px;line-height:12.5px"><i>Material</i><b>ByLayer</b></div>
<div class="row" style="top:172.50px;height:12px;line-height:11.5px"><i>Shadow display</i><b style="background:#f1f1f1">Shadows cast and rece...</b></div>
<div class="sec" style="top:187.30px">Print style</div>
<div class="row" style="top:199.50px;height:12px;line-height:11.5px"><i>Print style</i><b style="background:#f1f1f1">ByColor</b></div>
<div class="row" style="top:211.50px;height:12px;line-height:11.5px"><i>Print style table</i><b>None</b></div>
<div class="row" style="top:223.50px;height:13px;line-height:12.5px"><i>Print table attached to</i><b style="background:#f1f1f1">Model</b></div>
<div class="row" style="top:236.50px;height:12px;line-height:11.5px"><i>Print table type</i><b style="background:#f1f1f1">Color-dependent print st...</b></div>
<div class="sec" style="top:251.50px">View</div>
<div class="row" style="top:263.50px;height:12px;line-height:11.5px"><i>Center X</i><b style="background:#f1f1f1">1.349</b></div>
<div class="row" style="top:275.50px;height:12px;line-height:11.5px"><i>Center Y</i><b style="background:#f1f1f1">-4.807</b></div>
<div class="row" style="top:287.50px;height:13px;line-height:12.5px"><i>Center Z</i><b style="background:#f1f1f1">0</b></div>
<div class="row" style="top:300.50px;height:12px;line-height:11.5px"><i>Width</i><b style="background:#f1f1f1">130.877</b></div>
<div class="row" style="top:312.50px;height:13px;line-height:12.5px"><i>Height</i><b style="background:#f1f1f1">65.523</b></div>
<div class="sec" style="top:328.20px">Visual Style</div>
<div class="row" style="top:339.50px;height:13px;line-height:12.5px"><i>Visual style</i><b>2D Wireframe</b></div>
<div class="row" style="top:352.50px;height:12px;line-height:11.5px"><i>Backgrounds</i><b>On</b></div>
<div class="row" style="top:364.50px;height:12px;line-height:11.5px"><i>Edge jitter</i><b>-2</b></div>
<div class="row" style="top:376.50px;height:13px;line-height:12.5px"><i>Edge smoothing</i><b>1</b></div>
<div class="row" style="top:389.50px;height:12px;line-height:11.5px"><i>Material mode</i><b>None</b></div>
<div class="row" style="top:401.50px;height:13px;line-height:12.5px"><i>Halo gap</i><b>0</b></div>
<div class="row" style="top:414.50px;height:12px;line-height:11.5px"><i>Face opacity</i><b>-60</b></div>
<div class="row" style="top:426.50px;height:12px;line-height:11.5px"><i>Face style</i><b>None</b></div>
<div class="row" style="top:438.50px;height:13px;line-height:12.5px"><i>Face highlight</i><b>-30</b></div>
</div>
<!-- DRAWING CANVAS -->
<svg class="a" style="left:188px;top:118px;background:#000" width="872" height="437.5" viewBox="188 118 872 437.5">
<path d="M-452.0 118L188.2 555.5M-431.2 118L209.0 555.5M-389.6 118L250.6 555.5M-368.8 118L271.4 555.5M-348.0 118L292.2 555.5M-327.2 118L313.0 555.5M-285.5 118L354.7 555.5M-264.7 118L375.5 555.5M-243.9 118L396.3 555.5M-223.1 118L417.1 555.5M-181.5 118L458.7 555.5M-160.7 118L479.5 555.5M-139.9 118L500.3 555.5M-119.1 118L521.1 555.5M-77.4 118L562.8 555.5M-56.6 118L583.6 555.5M-35.8 118L604.4 555.5M-15.0 118L625.2 555.5M26.6 118L666.8 555.5M47.4 118L687.6 555.5M68.2 118L708.4 555.5M89.0 118L729.2 555.5M130.7 118L770.9 555.5M151.5 118L791.7 555.5M172.3 118L812.5 555.5M193.1 118L833.3 555.5M234.7 118L874.9 555.5M255.5 118L895.7 555.5M276.3 118L916.5 555.5M297.2 118L937.3 555.5M338.8 118L979.0 555.5M359.6 118L999.8 555.5M380.4 118L1020.6 555.5M401.2 118L1041.4 555.5M442.8 118L1083.0 555.5M463.6 118L1103.8 555.5M484.4 118L1124.6 555.5M505.3 118L1145.4 555.5M546.9 118L1187.1 555.5M567.7 118L1207.9 555.5M588.5 118L1228.7 555.5M609.3 118L1249.5 555.5M650.9 118L1291.1 555.5M671.7 118L1311.9 555.5M692.5 118L1332.7 555.5M713.4 118L1353.5 555.5M755.0 118L1395.2 555.5M775.8 118L1416.0 555.5M796.6 118L1436.8 555.5M817.4 118L1457.6 555.5M859.0 118L1499.2 555.5M879.8 118L1520.0 555.5M900.7 118L1540.8 555.5M921.5 118L1561.7 555.5M963.1 118L1603.3 555.5M983.9 118L1624.1 555.5M1004.7 118L1644.9 555.5M1025.5 118L1665.7 555.5M188 138.4L1060 -196.8M188 149.0L1060 -186.2M188 159.5L1060 -175.6M188 170.1L1060 -165.0M188 191.3L1060 -143.9M188 201.8L1060 -133.3M188 212.4L1060 -122.7M188 223.0L1060 -112.2M188 244.1L1060 -91.0M188 254.7L1060 -80.4M188 265.3L1060 -69.8M188 275.9L1060 -59.3M188 297.0L1060 -38.1M188 307.6L1060 -27.5M188 318.2L1060 -17.0M188 328.7L1060 -6.4M188 349.9L1060 14.8M188 360.5L1060 25.3M188 371.0L1060 35.9M188 381.6L1060 46.5M188 402.8L1060 67.6M188 413.4L1060 78.2M188 423.9L1060 88.8M188 434.5L1060 99.4M188 455.7L1060 120.5M188 466.2L1060 131.1M188 476.8L1060 141.7M188 487.4L1060 152.2M188 508.5L1060 173.4M188 519.1L1060 184.0M188 529.7L1060 194.6M188 540.3L1060 205.1M188 561.4L1060 226.3M188 572.0L1060 236.9M188 582.6L1060 247.4M188 593.1L1060 258.0M188 614.3L1060 279.2M188 624.9L1060 289.7M188 635.4L1060 300.3M188 646.0L1060 310.9M188 667.2L1060 332.0M188 677.8L1060 342.6M188 688.3L1060 353.2M188 698.9L1060 363.8M188 720.1L1060 384.9M188 730.6L1060 395.5M188 741.2L1060 406.1M188 751.8L1060 416.6M188 772.9L1060 437.8M188 783.5L1060 448.4M188 794.1L1060 459.0M188 804.7L1060 469.5M188 825.8L1060 490.7M188 836.4L1060 501.3M188 847.0L1060 511.8M188 857.5L1060 522.4M188 878.7L1060 543.6M188 889.3L1060 554.1" stroke="#121212" stroke-width=".8" fill="none"/>
<path d="M-410.4 118L229.8 555.5M-306.3 118L333.8 555.5M-202.3 118L437.9 555.5M-98.2 118L541.9 555.5M5.8 118L646.0 555.5M109.9 118L750.0 555.5M213.9 118L854.1 555.5M318.0 118L958.2 555.5M422.0 118L1062.2 555.5M526.1 118L1166.3 555.5M630.1 118L1270.3 555.5M734.2 118L1374.4 555.5M838.2 118L1478.4 555.5M942.3 118L1582.5 555.5M1046.3 118L1686.5 555.5M188 127.8L1060 -207.3M188 180.7L1060 -154.5M188 233.6L1060 -101.6M188 286.4L1060 -48.7M188 339.3L1060 4.2M188 392.2L1060 57.1M188 445.1L1060 109.9M188 498.0L1060 162.8M188 550.8L1060 215.7M188 603.7L1060 268.6M188 656.6L1060 321.5M188 709.5L1060 374.3M188 762.4L1060 427.2M188 815.2L1060 480.1M188 868.1L1060 533.0" stroke="#252525" stroke-width=".8" fill="none"/>
<path d="M795.0 371.0L1060.0 269.2" stroke="#591310" stroke-width="0.9"/>
<path d="M188.0 243.0L327.0 337.5" stroke="#1f6a25" stroke-width="0.9"/>
<path d="M794.0 371.0L594.7 234.8" stroke="#4f6f86" stroke-width="2.4" opacity="0.4"/>
<path d="M594.7 234.8L327.0 337.5" stroke="#4f6f86" stroke-width="2.4" opacity="0.4"/>
<path d="M794.0 371.0L594.7 234.8" stroke="#5d7a8d" stroke-width="1"/>
<path d="M594.7 234.8L327.0 337.5" stroke="#64849a" stroke-width="1.2"/>
<path d="M327.0 337.5L526.3 473.7" stroke="#379484" stroke-width="1.3"/>
<path d="M526.3 473.7L794.0 371.0" stroke="#6e767e" stroke-width="1.3"/>
<path d="M327.0 337.5L327.0 292.5" stroke="#8fa6b8" stroke-width="1"/>
<path d="M526.3 473.7L526.3 428.7" stroke="#8fa6b8" stroke-width="1"/>
<path d="M794.0 371.0L794.0 326.0" stroke="#8fa6b8" stroke-width="1"/>
<path d="M594.7 234.8L594.7 189.8" stroke="#8fa6b8" stroke-width="1"/>
<path d="M324.5 337.0L324.5 293.0" stroke="#8fa6b8" stroke-width="0.8"/>
<path d="M794.0 326.0L594.7 189.8" stroke="#5f7f95" stroke-width="2.6" opacity="0.35"/>
<path d="M594.7 189.8L327.0 292.5" stroke="#5f7f95" stroke-width="2.6" opacity="0.35"/>
<path d="M327.0 292.5L526.3 428.7" stroke="#b2c0ca" stroke-width="1"/>
<path d="M526.3 428.7L794.0 326.0" stroke="#a9b9c4" stroke-width="1"/>
<path d="M794.0 326.0L594.7 189.8" stroke="#6f8797" stroke-width="1.1"/>
<path d="M594.7 189.8L327.0 292.5" stroke="#7f97a7" stroke-width="1.3"/>
<path d="M415.8 363.0L440.0 380.0" stroke="#cfcfcf" stroke-width="0.9"/>
<path d="M415.8 396.0L440.0 413.0" stroke="#cfcfcf" stroke-width="0.9"/>
<path d="M440.0 380.0L705.0 278.8" stroke="#cfcfcf" stroke-width="0.9"/>
<path d="M440.0 413.0L705.0 311.8" stroke="#cfcfcf" stroke-width="0.9"/>
<path d="M705.0 278.8L680.0 262.0" stroke="#cfcfcf" stroke-width="0.9"/>
<path d="M705.0 311.8L680.0 295.0" stroke="#cfcfcf" stroke-width="0.9"/>
<path d="M680.0 262.0L415.8 363.0" stroke="#cfcfcf" stroke-width="0.9"/>
<path d="M680.0 295.0L415.8 396.0" stroke="#cfcfcf" stroke-width="0.9"/>
<path d="M415.8 363.0L415.8 396.0" stroke="#cfcfcf" stroke-width="0.9"/>
<path d="M440.0 380.0L440.0 413.0" stroke="#cfcfcf" stroke-width="0.9"/>
<path d="M705.0 278.8L705.0 311.8" stroke="#cfcfcf" stroke-width="0.9"/>
<path d="M680.0 262.0L680.0 295.0" stroke="#cfcfcf" stroke-width="0.9"/>
<path d="M302.6 290.2L596.2 177.5" stroke="#dcdcdc" stroke-width="1"/>
<path d="M596.2 177.5L816.2 327.5" stroke="#dcdcdc" stroke-width="1"/>
<path d="M816.2 327.5L524.5 439.2" stroke="#dcdcdc" stroke-width="1"/>
<path d="M524.5 439.2L302.6 290.2" stroke="#dcdcdc" stroke-width="1"/>
<path d="M304.5 292.8L593.8 185.0" stroke="#d6d6d6" stroke-width="0.9"/>
<path d="M593.8 185.0L811.0 331.0" stroke="#d6d6d6" stroke-width="0.9"/>
<path d="M811.0 331.0L524.2 442.0" stroke="#d6d6d6" stroke-width="0.9"/>
<path d="M524.2 442.0L306.6 295.5" stroke="#d6d6d6" stroke-width="0.9"/>
<path d="M559.5 246.0L302.6 290.2" stroke="#dcdcdc" stroke-width="1"/>
<path d="M559.5 246.0L596.2 177.5" stroke="#dcdcdc" stroke-width="1"/>
<path d="M559.5 246.0L816.2 327.5" stroke="#dcdcdc" stroke-width="1"/>
<path d="M559.3 249.5L307.2 294.5" stroke="#d6d6d6" stroke-width="0.9"/>
<path d="M559.3 249.5L593.8 185.0" stroke="#d6d6d6" stroke-width="0.9"/>
<path d="M559.3 249.5L811.0 331.0" stroke="#d6d6d6" stroke-width="0.9"/>
<path d="M559.5 246.0L524.2 442.0" stroke="#fafafa" stroke-width="1.5"/>
<path d="M302.6 290.2L307.2 294.5" stroke="#dcdcdc" stroke-width="1"/>
<path d="M816.2 327.5L811.0 331.0" stroke="#dcdcdc" stroke-width="1"/>
<path d="M596.2 177.5L593.8 185.0" stroke="#dcdcdc" stroke-width="1"/>
<path d="M524.5 439.2L524.2 442.0" stroke="#dcdcdc" stroke-width="1"/>
<path d="M256.7 300.5L306.6 281.7" stroke="#a82c26" stroke-width="1.1"/>
<path d="M262.8 277.8L301.8 303.6" stroke="#2b8a35" stroke-width="0.9"/>
<path d="M282.3 262.2L282.3 318.2" stroke="#2424a0" stroke-width="1.2"/>
<path d="M241.0 529.3L241.0 492.0" stroke="#2222d8" stroke-width="1.4"/>
<path d="M241 487.400l-3.300 8.600h6.600z" fill="#0a0a70" stroke="#2a2ae0" stroke-width=".9"/><ellipse cx="241" cy="496" rx="3.300" ry="1.200" fill="none" stroke="#2a2ae0" stroke-width=".8"/>
<path d="M241.0 529.3L272.0 517.0" stroke="#d02a1a" stroke-width="1.4"/>
<path d="M279.800 513.600l-9.400-.2 2.600 6.200z" fill="#5a0a05" stroke="#e0301e" stroke-width=".9"/><ellipse cx="271.700" cy="516.500" rx="1.500" ry="3.300" transform="rotate(-22 271.700 516.500)" fill="none" stroke="#e0301e" stroke-width=".8"/>
<path d="M241.0 529.3L217.5 513.5" stroke="#22a82a" stroke-width="1.2"/>
<path d="M211.300 509.500l9.300 1-3.600 5.600z" fill="#063a08" stroke="#2ac032" stroke-width=".9"/><ellipse cx="218.800" cy="513.300" rx="1.500" ry="3.300" transform="rotate(33 218.800 513.300)" fill="none" stroke="#2ac032" stroke-width=".8"/>
<path d="M235.500 529.500l5.500-2.300 5.500 2.500-5.500 2.300z" fill="#000" stroke="#e8e8e8" stroke-width=".9"/>
<g font-family="Liberation Sans, sans-serif" font-size="11.500" fill="#d2d2d2" text-anchor="middle"><text x="241" y="480.800">Z</text><text x="290.300" y="515">X</text><text x="204.200" y="508.300">Y</text></g>
</svg>
<!-- HOT TOGGLES -->
<div id="hot" class="a">
  <div class="a" style="left:0;top:0;width:62.500px;height:16.300px;background:#fff"></div>
  <div class="t" style="left:5px;top:4.300px;font-size:7.200px;color:#a4a4a4;letter-spacing:-.1px">Hot Toggles!</div>
  <div class="a" style="left:51.400px;top:3.700px;width:9.300px;height:9.800px;background:#dedede"></div>
  <div class="cb" style="top:18.300px"><svg style="position:absolute;left:0;top:0" width="6" height="6" viewBox="0 0 6 6"><path d="M.9 3.100l1.500 1.700L5.200.700" fill="none" stroke="#222" stroke-width=".8"/></svg></div><div class="cb" style="top:26.700px"><svg style="position:absolute;left:0;top:0" width="6" height="6" viewBox="0 0 6 6"><path d="M.9 3.100l1.500 1.700L5.200.700" fill="none" stroke="#222" stroke-width=".8"/></svg></div><div class="cb" style="top:35.100px"></div><div class="cb" style="top:43.300px"></div><div class="cb" style="top:51.700px"><svg style="position:absolute;left:0;top:0" width="6" height="6" viewBox="0 0 6 6"><path d="M.9 3.100l1.500 1.700L5.200.700" fill="none" stroke="#222" stroke-width=".8"/></svg></div><div class="cb" style="top:60px"><svg style="position:absolute;left:0;top:0" width="6" height="6" viewBox="0 0 6 6"><path d="M.9 3.100l1.500 1.700L5.200.700" fill="none" stroke="#222" stroke-width=".8"/></svg></div><div class="cb" style="top:68.200px"><svg style="position:absolute;left:0;top:0" width="6" height="6" viewBox="0 0 6 6"><path d="M.9 3.100l1.500 1.700L5.200.700" fill="none" stroke="#222" stroke-width=".8"/></svg></div>
    <div class="l" style="top:18.900px">Point Protection</div>
  <div class="l" style="top:27.300px">Log File Output</div>
  <div class="l" style="top:35.700px">Input scale</div>
  <div class="l" style="top:43.900px">Output scale</div>
  <div class="l" style="top:52.400px">Draw lines/curves</div>
  <div class="l" style="top:60.600px">Draw distances</div>
  <div class="l" style="top:68.900px">Draw bearings</div>
  <div class="l" style="left:3.400px;top:79px">Next pt:</div>
  <div class="a" style="left:26.700px;top:77px;width:34px;height:10.500px;background:#fff;border:.7px solid #555"></div>
  <div class="l" style="left:29px;top:79px">1</div>
  <div class="l" style="left:4.800px;top:90.700px">Low pt:</div>
  <div class="a" style="left:26.700px;top:88.700px;width:34px;height:10.200px;background:#f0f0f0;border:.7px solid #9a9a9a"></div>
  <div class="l" style="left:29px;top:90.700px">1</div>
  <div class="a" style="left:8.800px;top:102px;width:44.200px;height:7.800px;background:#e1e1e1;border:.6px solid #adadad"></div>
  <div class="l" style="left:20.500px;top:102.500px">Refresh</div>
</div>
<!-- RIGHT VERTICAL TOOLBAR -->
<div class="a" style="left:1061px;top:108px;width:17px;height:241px;background:linear-gradient(90deg,#dedee2,#d0d0d4 50%,#bcbcc2);border-radius:2px"></div>
<svg class="a" style="left:1061px;top:108px" width="17" height="245" viewBox="0 0 17 245">
  <g fill="#77777d"><circle cx="2.500" cy="2.800" r=".55"/><circle cx="5" cy="2.800" r=".55"/><circle cx="7.500" cy="2.800" r=".55"/><circle cx="10" cy="2.800" r=".55"/><circle cx="12.500" cy="2.800" r=".55"/><circle cx="15" cy="2.800" r=".55"/></g>
  <rect x="1.500" y="54" width="14" height="12.500" fill="#f9b84a" stroke="#e09a30" stroke-width=".5"/>
  <g fill="none" stroke="#555" stroke-width=".9">
    <path d="M4 11h7"/><path d="M4.500 27v-4h6"/><path d="M4 32v8M12 32v8"/><circle cx="8.500" cy="47.500" r="3.800"/>
    <path d="M4 56l9 9" stroke="#333" stroke-width="1.100"/>
    <path d="M4 69.500h9M8.500 69.500l-4 5.500M8.500 69.500l4 5.500"/><circle cx="8.500" cy="84.500" r="3.800"/>
    <path d="M8.500 94v10M4 99h9"/><path d="M5.500 106.500l6 6"/><circle cx="8.500" cy="114" r="2.300"/><circle cx="8.500" cy="122" r="3.800"/>
    <rect x="5" y="129.500" width="6" height="5" rx="1"/><circle cx="11" cy="136" r="2"/>
    <path d="M5.500 164.500l7-7"/><path d="M4.500 176l7-7M6.500 178l7-7" stroke="#888"/>
    <path d="M4.500 184l8 6M4.500 190l8-6"/><path d="M4.500 197l5 3.500-5 3.500M9.500 200.500h4"/>
    <path d="M6 219l3-4 3 2M9 215l1-3M7.500 222.500l2-3.500" stroke="#444" stroke-width="1.100"/>
  </g>
  <g fill="#e0281e"><circle cx="12" cy="11" r="1.100"/><circle cx="4" cy="11" r=".8"/><circle cx="11.500" cy="23" r="1.100"/><circle cx="4.500" cy="27" r=".8"/><circle cx="4" cy="32" r="1"/><circle cx="8" cy="36" r="1"/><circle cx="12" cy="40" r="1"/><circle cx="11.500" cy="50.500" r="1"/>
  <circle cx="11" cy="63" r="1.100"/><circle cx="8.500" cy="69.500" r="1.100"/><circle cx="8.500" cy="84.500" r="1.100"/><circle cx="8.500" cy="99" r="1.100"/><circle cx="5.500" cy="106.500" r="1"/>
  <circle cx="8.500" cy="118" r="1"/><circle cx="8.500" cy="126" r="1"/><circle cx="4.700" cy="122" r="1"/><circle cx="12.300" cy="122" r="1"/><circle cx="8.500" cy="146" r="1.100"/><circle cx="8" cy="162" r="1"/><circle cx="8.500" cy="187" r="1"/><circle cx="9.500" cy="200.500" r="1"/></g>
  <path d="M4 152.500h9M4 180.500h9M4 207.500h9" stroke="#9a9aa0" stroke-width=".5"/>
  <circle cx="10" cy="211.500" r="1.300" fill="#444"/>
  <path d="M5 227l7 7M12 227l-7 7" stroke="#e8501a" stroke-width="2"/><path d="M8.500 226v9M4 230.500h9" stroke="#e8501a" stroke-width="1"/>
</svg>
<!-- LAYOUT TABS -->
<div class="a" style="left:188px;top:555.500px;width:872px;height:9px;background:#efefef"></div>
<svg class="a" style="left:188px;top:555.500px" width="160" height="9" viewBox="0 0 160 9">
  <g fill="#f6f6f6" stroke="#b4b4b4" stroke-width=".5"><rect x=".5" y=".5" width="8.500" height="8"/><rect x="9.500" y=".5" width="8.500" height="8"/><rect x="18.500" y=".5" width="8.500" height="8"/><rect x="27.500" y=".5" width="8.500" height="8"/></g>
  <g fill="#111"><path d="M6.500 2v5L3.800 4.500z"/><rect x="2.800" y="2" width=".9" height="5"/><path d="M15.300 2v5l-3-2.500z"/><path d="M21.800 2v5l3-2.500z"/><path d="M29.800 2v5l2.700-2.500z"/><rect x="32.700" y="2" width=".9" height="5"/></g>
  <path d="M37 .5l3.500 8h21l3.500-8z" fill="#fff"/>
  <path d="M37 .5l3.500 8h21.500l3-8" fill="none" stroke="#444" stroke-width=".6"/>
  <path d="M62 8.500h33.500l3-8M96.500 1l3.500 7.500h28.500l3.500-8" fill="none" stroke="#444" stroke-width=".6"/>
</svg>
<div class="t" style="left:230.300px;top:557.300px;font-size:6.500px;font-weight:bold;color:#111;letter-spacing:-.25px">Model</div>
<div class="t" style="left:258.300px;top:557.300px;font-size:6.400px;color:#333;letter-spacing:-.2px">Layout1</div>
<div class="t" style="left:292px;top:557.300px;font-size:6.400px;color:#333;letter-spacing:-.2px">Layout2</div>
<!-- COMMAND WINDOW -->
<div id="cmd" class="a">
  <div class="a" style="left:0;top:0;width:11px;height:74px;background:#c9c9c9"></div>
  <svg class="a" style="left:3px;top:3.500px" width="7" height="18" viewBox="0 0 7 18"><path d="M1 1.500l4 4M5 1.500l-4 4" stroke="#222" stroke-width=".9"/><path d="M.8 13.500h4.600l-2.300 2.800z" fill="#222"/></svg>
  <div class="hl" style="top:2.30px">Cancel</div>
  <div class="hl" style="top:10.10px">Command:</div>
  <div class="hl" style="top:17.85px">Command:</div>
  <div class="hl" style="top:25.60px">Command:</div>
  <div class="hl" style="top:33.35px">Cancel</div>
  <div class="hl" style="top:41.10px">Command: _vscurrent</div>
  <div class="hl" style="top:49.10px">Enter an option [2DWireframe/Conceptual/Hidden/Realistic/Shaded/shaded with Edges/shades of Gray/SKetchy/Wireframe/X-ray/Other] &lt;Realistic&gt;: _2dw</div>
  <div class="a" style="left:11px;top:61.500px;width:1058px;height:.7px;background:#c8c8c8"></div>
  <div class="t" style="left:13px;top:63.800px;font-family:'Liberation Mono',monospace;font-size:6.400px;color:#222">Command:</div>
  <div class="a" style="left:1069px;top:0;width:11px;height:62px;background:#f2f2f2"></div>
  <div class="a" style="left:1070px;top:42.500px;width:8.500px;height:9px;background:#c4c4c4"></div>
  <svg class="a" style="left:1070.500px;top:5px" width="8" height="56" viewBox="0 0 8 56"><path d="M1.500 4.200l2.500-2.500 2.500 2.500M1.500 51l2.500 2.500 2.500-2.500" fill="none" stroke="#555" stroke-width=".9"/></svg>
</div>
<!-- STATUS BAR -->
<div id="status" class="a">
  <div class="a" style="left:0;top:0;width:1080px;height:1.500px;background:#2c2e33"></div>
  <div class="a" style="left:579px;top:2px;width:.6px;height:13px;background:#5a5a5c"></div>
  <div class="t" style="left:582px;top:6px;font-size:6.500px;color:#f0f0f0;letter-spacing:-.25px">3.062,65.060,0.000</div>
  <svg class="a" style="left:696px;top:1.500px" width="384" height="14.500" viewBox="696 0 384 14.500">
    <g fill="#8a8c90"><rect x="699.500" y="1.500" width="13.500" height="12.500" fill="#b4b8bc"/><rect x="761" y="1.500" width="13.500" height="12.500"/><rect x="810.500" y="1.500" width="13.500" height="12.500"/><rect x="827.500" y="1.500" width="13.500" height="12.500"/><rect x="861.500" y="1.500" width="13.500" height="12.500"/><rect x="878.500" y="1.500" width="13.500" height="12.500"/></g>
    <path d="M701 13L711.500 2.500" stroke="#e03a2a" stroke-width="1"/><path d="M701 9h11M706 3v10" stroke="#e8e8e8" stroke-width=".7"/><rect x="706" y="9" width="6" height="4" fill="#c8d8e8"/>
    <path d="M717 8h11M722.500 3v10" stroke="#d8281e" stroke-width="1"/><circle cx="722.500" cy="8" r="1" fill="#f0f0f0"/>
    <path d="M738.700 3v5.500l-4.500 3.500M738.700 8.500l4.500 3.500" stroke="#f4f4f4" stroke-width="1.500" fill="none"/>
    <path d="M763.500 12l4-8.500 4 8.500M765 9h5" stroke="#f4f4f4" stroke-width="1.100" fill="none"/><rect x="768" y="7.500" width="5" height="5" fill="#e8d84a"/>
    <path d="M784.600 3v5.500l-4.500 3.500M784.600 8.500l4.500 3.500" stroke="#f4f4f4" stroke-width="1.300" fill="none"/><path d="M788 3v3M786.500 4.500h3" stroke="#f4f4f4" stroke-width=".8"/>
    <g fill="#f0f0f0"><circle cx="797.500" cy="4.500" r=".8"/><circle cx="801" cy="4.500" r=".8"/><circle cx="804.500" cy="4.500" r=".8"/><circle cx="797.500" cy="8" r=".8"/><circle cx="801" cy="8" r=".8" fill="#e03a2a"/><circle cx="804.500" cy="8" r=".8"/><circle cx="797.500" cy="11.500" r=".8"/><circle cx="801" cy="11.500" r=".8"/><circle cx="804.500" cy="11.500" r=".8"/></g>
    <path d="M813 2.500v10.500M815.800 2.500v10.500M818.600 2.500v10.500M821.400 2.500v10.500M811.500 4h11.500M811.500 6.800h11.500M811.500 9.600h11.500M811.500 12.400h11.500" stroke="#3a3a3c" stroke-width=".6"/>
    <path d="M829.500 5h4M831.500 3v4" stroke="#222" stroke-width="1"/><rect x="832" y="9" width="7.500" height="3" fill="#222"/>
    <path d="M846.500 3v9.500h10" stroke="#2aa84a" stroke-width="1.100" fill="none"/><path d="M850 9v3.500h4" stroke="#e03a2a" stroke-width="1.100" fill="none"/>
    <circle cx="868.200" cy="7.800" r="4.300" fill="none" stroke="#222" stroke-width="1.100"/><path d="M868.200 7.800l3-3" stroke="#e03a2a" stroke-width="1"/>
    <rect x="881.500" y="4" width="8.500" height="8" fill="none" stroke="#222" stroke-width="1"/><rect x="880.300" y="2.800" width="2.600" height="2.600" fill="#e03a2a"/>
    <path d="M897 12.500h10M897 12.500l8.500-8.500" stroke="#f0f0f0" stroke-width="1" fill="none"/><path d="M902 12.500a5 5 0 0 0-1.500-3.500" stroke="#f0f0f0" stroke-width=".7" fill="none"/>
    <path d="M913 4h11M913 7h11M913 10h7M913 12.800h7" stroke="#f4f4f4" stroke-width="1.300"/>
    <g transform="translate(984.200 7.800)"><circle r="4" fill="none" stroke="#1b63d6" stroke-width="2.400" stroke-dasharray="1.900 1.240"/><circle r="3.500" fill="#1b63d6"/><circle r="1.300" fill="#2a2f3a"/></g>
    <circle cx="999.700" cy="4" r="1.600" fill="none" stroke="#f4f4f4" stroke-width=".9"/><path d="M996.500 7.500h6.500M999.700 6v3l-2.500 4M999.700 9l2.500 4" stroke="#f4f4f4" stroke-width="1" fill="none"/>
    <rect x="1011.500" y="3" width="10.500" height="9" fill="#2558b0" stroke="#e8eef8" stroke-width=".7"/><rect x="1012.800" y="4.300" width="4" height="3" fill="#fff"/><rect x="1011.500" y="9.500" width="10.500" height="2.500" fill="#e8eef8"/>
    <rect x="1028" y="2.500" width="8" height="6.500" fill="#f4f4f4"/><rect x="1032" y="6" width="8.500" height="6.500" fill="#f4f4f4" stroke="#1e4a9a" stroke-width="1"/>
    <rect x="1045" y="2" width="12" height="11.500" rx="1.500" fill="#dfe6ee"/><circle cx="1051" cy="7.800" r="3.600" fill="#fff" stroke="#556" stroke-width=".9"/><path d="M1051 7.800V5.300M1051 7.800l2 1" stroke="#2a6ad8" stroke-width=".8"/>
    <circle cx="1067.300" cy="7.800" r="4.300" fill="#3fae4a"/><path d="M1065 7.800l1.700 1.900 3-3.600" stroke="#fff" stroke-width="1.100" fill="none"/>
  </svg>
  <div class="t" style="left:748.500px;top:6.200px;font-size:6px;color:#f0f0f0;letter-spacing:-.3px">1:1</div>
  <div class="t" style="left:929px;top:6px;font-size:6.400px;color:#f4f4f4;letter-spacing:-.25px">MODEL</div>
  <div class="t" style="left:953.500px;top:6px;font-size:6.400px;color:#6c6c70;letter-spacing:-.35px">TABLET</div>
</div>
</body></html>
